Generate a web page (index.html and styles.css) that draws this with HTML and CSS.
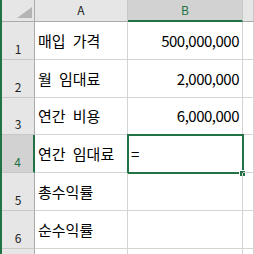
FILE: index.html
```html
<!DOCTYPE html>
<html lang="ko">
<head>
  <meta charset="UTF-8" />
  <title>Sheet1</title>
  <link rel="stylesheet" href="styles.css">
</head>
<body>

  <div class="sheet">
    <!-- header row -->
    <div class="corner">
      <svg width="15" height="11" viewBox="0 0 15 11"><polygon points="15,0 15,11 0,11" fill="#b4b4b4"/></svg>
    </div>
    <div class="col-head">A</div>
    <div class="col-head on">B</div>
    <div class="col-head"></div>

    <div class="row-head">1</div>
    <div class="cell">매입 가격</div>
    <div class="cell num">500,000,000</div>
    <div class="cell"></div>

    <div class="row-head">2</div>
    <div class="cell">월 임대료</div>
    <div class="cell num">2,000,000</div>
    <div class="cell"></div>

    <div class="row-head">3</div>
    <div class="cell">연간 비용</div>
    <div class="cell num">6,000,000</div>
    <div class="cell"></div>

    <div class="row-head on">4</div>
    <div class="cell">연간 임대료</div>
    <div class="cell active">=<span class="sel"><span class="handle"></span></span></div>
    <div class="cell"></div>

    <div class="row-head">5</div>
    <div class="cell">총수익률</div>
    <div class="cell"></div>
    <div class="cell"></div>

    <div class="row-head">6</div>
    <div class="cell">순수익률</div>
    <div class="cell"></div>
    <div class="cell"></div>

    <!-- row 7, only its top edge shows -->
    <div class="row-head"></div>
    <div class="cell"></div>
    <div class="cell"></div>
    <div class="cell"></div>
  </div>

</body>
</html>
```

FILE: styles.css
```css
body {
  margin: 0;
  background: #fff;
  font-family: "Noto Sans CJK KR", sans-serif;
}

.sheet {
  display: grid;
  grid-template-columns: 33px 93px 115px 1fr;
  grid-template-rows: 22px 38px 38px 37px 38px 38px 38px 1fr;
  height: 254px;
  overflow: hidden;
  border-left: 2px solid #217346;
}

.sheet > div {
  box-sizing: border-box;
}

.corner {
  background: #e6e6e6;
  border-right: 1px solid #ababab;
  border-bottom: 1px solid #ababab;
  display: flex;
  align-items: flex-end;
  justify-content: flex-end;
  padding: 0 2px 3px 0;
}

.corner svg {
  display: block;
}

.col-head {
  background: #e6e6e6;
  border-right: 1px solid #c8c8c8;
  border-bottom: 1px solid #ababab;
  color: #222;
  font-size: 12px;
  line-height: 20px;
  text-align: center;
}

.col-head.on {
  background: #d2d2d2;
  color: #217346;
  border-bottom: 2px solid #217346;
}

.row-head {
  background: #e6e6e6;
  border-right: 1px solid #ababab;
  border-bottom: 1px solid #c8c8c8;
  color: #222;
  font-size: 12px;
  line-height: 16px;
  display: flex;
  align-items: flex-end;
  justify-content: center;
  padding-bottom: 2px;
}

.row-head.on {
  background: #d2d2d2;
  color: #217346;
  border-right: 2px solid #217346;
}

.cell {
  position: relative;
  border-right: 1px solid #d4d4d4;
  border-bottom: 1px solid #d4d4d4;
  font-size: 15px;
  line-height: 20px;
  color: #000;
  display: flex;
  align-items: flex-end;
  padding: 0 2px 8px 3px;
  white-space: nowrap;
  word-spacing: 3px;
}

.cell.num {
  justify-content: flex-end;
  letter-spacing: -0.5px;
  padding-right: 3px;
}

/* active cell frame */
.sel {
  position: absolute;
  left: -1px;
  top: -1px;
  width: 117px;
  height: 40px;
  box-sizing: border-box;
  border: 2px solid #217346;
}

.handle {
  position: absolute;
  left: 110px;
  top: 34px;
  width: 7px;
  height: 7px;
  box-sizing: border-box;
  background: #217346;
  border: 1px solid #fff;
}
```
